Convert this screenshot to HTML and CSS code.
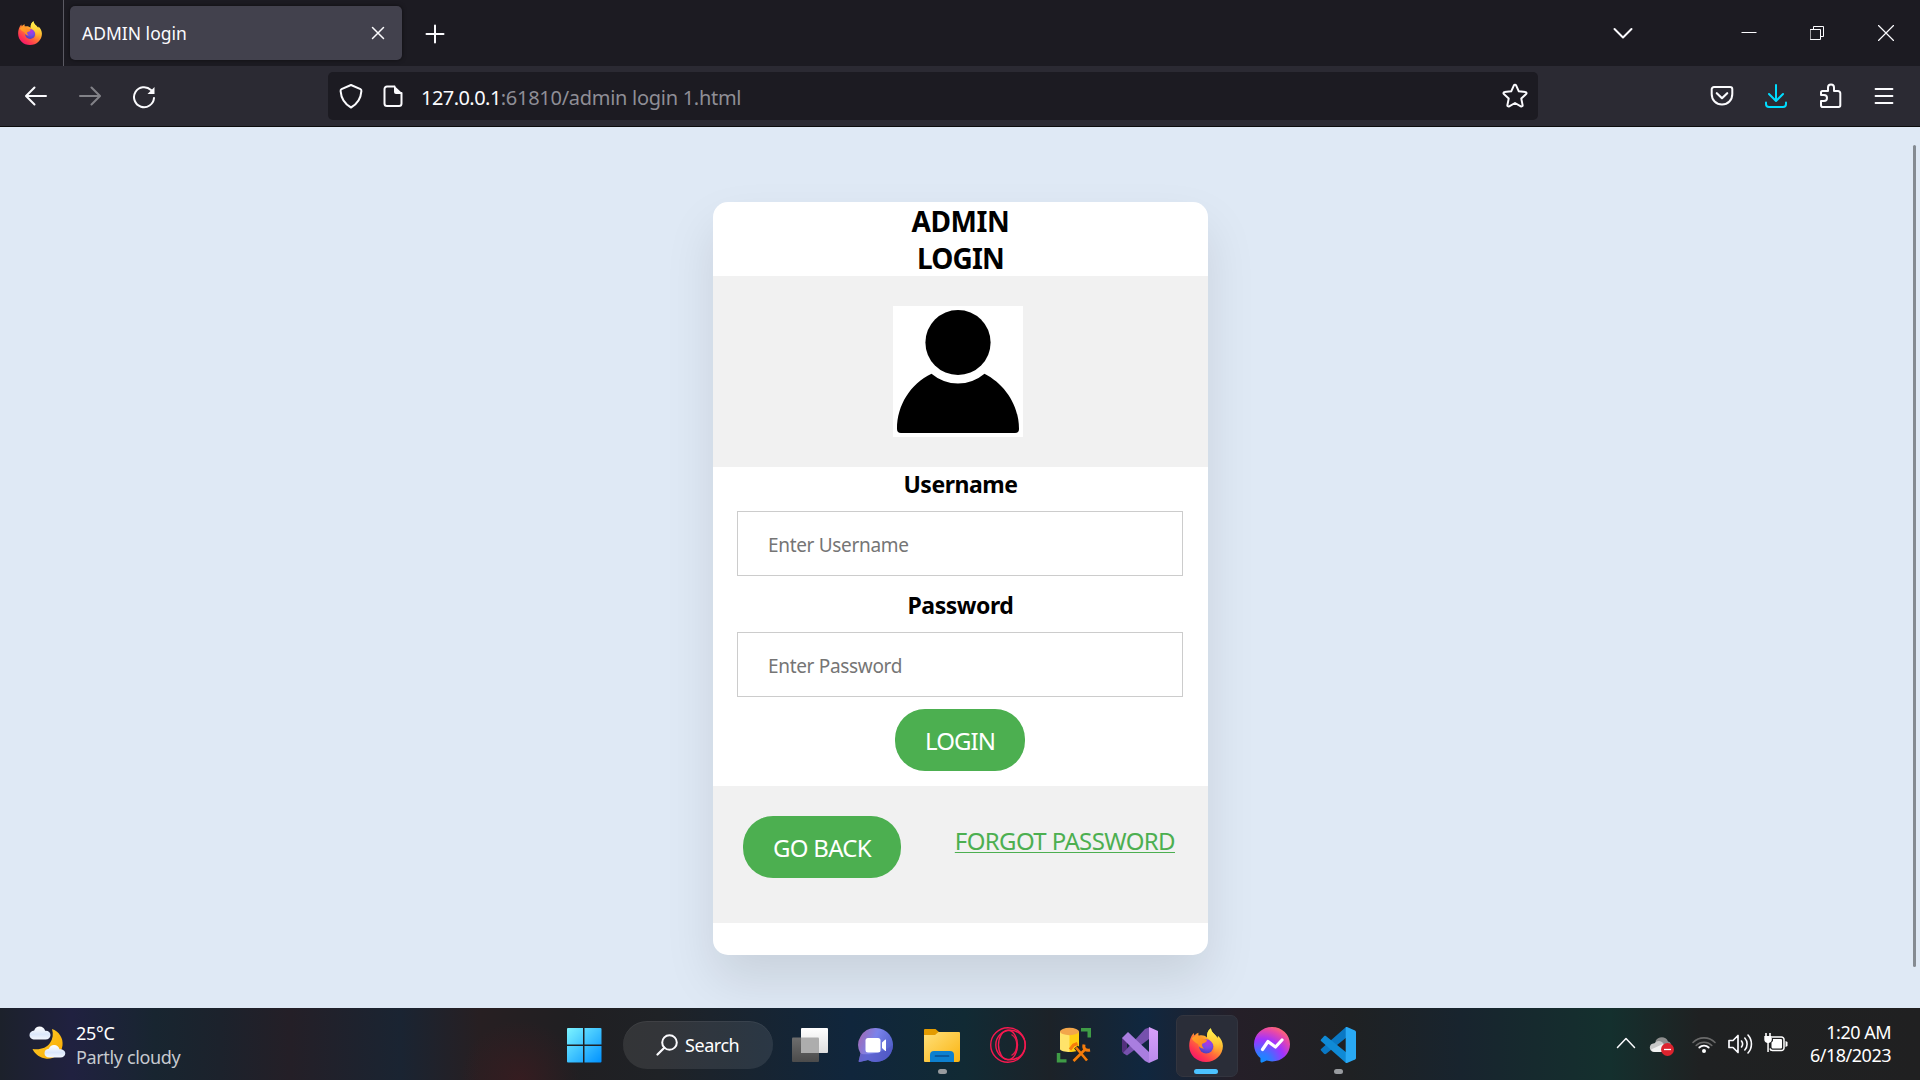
FILE: index.html
```html
<!DOCTYPE html>
<html lang="en">
<head>
<meta charset="utf-8">
<title>ADMIN login</title>
<link rel="stylesheet" href="styles.css">
</head>
<body>
<svg class="defs" width="0" height="0" aria-hidden="true">
  <defs>
    <linearGradient id="fxBody" x1=".85" y1=".1" x2=".2" y2=".95"><stop offset="0" stop-color="#fff44f"/><stop offset=".3" stop-color="#ffb52e"/><stop offset=".55" stop-color="#ff7139"/><stop offset=".8" stop-color="#ff3750"/><stop offset="1" stop-color="#f5156c"/></linearGradient>
    <linearGradient id="fxFlame" x1=".5" y1="0" x2=".5" y2="1"><stop offset="0" stop-color="#fff44f"/><stop offset=".55" stop-color="#ffcb37" stop-opacity=".85"/><stop offset="1" stop-color="#ff8a2a" stop-opacity="0"/></linearGradient>
    <radialGradient id="fxGlobe" cx=".6" cy=".25" r=".8"><stop offset="0" stop-color="#b833e1"/><stop offset=".45" stop-color="#7a4be8"/><stop offset="1" stop-color="#4a40b8"/></radialGradient>
    <linearGradient id="fxHead" x1="0" y1="0" x2="1" y2="1"><stop offset="0" stop-color="#ffa42a"/><stop offset="1" stop-color="#ff8020"/></linearGradient>
    <symbol id="firefox" viewBox="0 0 34 34">
      <path fill="url(#fxBody)" d="M2.4 8.2C3.4 6.5 4.2 5.5 4.9 5c0 1 .1 1.800.4 2.600C6.500 6.200 8 5.100 9.500 4.700c-.3 1.100-.2 2.200.1 3C13 6.800 16 7.500 18 9.500c-.3-3.800.8-7.200 3.900-9.300.2 2.900 2.100 4.600 4.500 7 .8.8 1.600 1.800 2.100 2.800l.5-2.300C32 10.500 33.900 14 33.900 18c0 8.900-7.500 16-16.900 16S.2 27 .2 18c0-3.700.8-6.900 2.200-9.800z"/>
      <circle cx="17.200" cy="18.400" r="7.100" fill="url(#fxGlobe)"/>
      <path fill="url(#fxHead)" d="M2.600 10.500C5 8 8 7.300 10.500 8.100c1.300 2 2.700 2.700 5.600 3.200 1.200.2 2 .7 1.700 1.700-.3 1.200-2.600 2.200-4.600 2.700-.5 2 .3 3.800 2.200 4.800-3.300.3-5.800-1.500-6.300-4.500-2-1-4.500-2.500-6.500-5.500z"/>
      <path fill="url(#fxFlame)" d="M18 9.500c-.3-3.800.8-7.200 3.900-9.300.2 2.900 2.100 4.600 4.500 7 3 3 4.200 7 3.400 11.500-.8 5-4 8.300-8 9.300 4-4 4.300-8.600 2.300-12.300C22.700 13 20 11.800 18 9.500z"/>
    </symbol>
  </defs>
</svg>

<header class="browser">
  <div class="tabstrip">
    <div class="fxview"><svg width="24" height="24"><use href="#firefox"/></svg></div>
    <div class="tab">
      <span class="tab-title">ADMIN login</span>
      <svg class="line" width="14" height="14" viewBox="0 0 14 14"><path d="M1.500 1.500l11 11M12.500 1.500l-11 11" stroke-width="1.500"/></svg>
    </div>
    <svg class="line newtab" width="20" height="20" viewBox="0 0 20 20"><path d="M10 1.500v17M1.500 10h17" stroke-width="2"/></svg>
    <div class="winbuttons">
      <svg class="line" width="20" height="20" viewBox="0 0 20 20"><path d="M1.500 6l8.500 8.500L18.500 6" stroke-width="2"/></svg>
      <svg class="line min" width="16" height="16" viewBox="0 0 16 16"><path d="M.5 7.500h15" stroke-width="1" stroke-linecap="butt"/></svg>
      <svg class="line restore" width="14" height="14" viewBox="0 0 14 14"><path d="M.5 3.500h10v10H.5zM3.500 3.500v-3h10v10h-3" stroke-width="1" stroke-linejoin="miter"/></svg>
      <svg class="line close" width="16" height="16" viewBox="0 0 16 16"><path d="M.5.5l15 15M15.500.5l-15 15" stroke-width="1.200"/></svg>
    </div>
  </div>
  <nav class="toolbar">
    <svg class="line back" width="24" height="24" viewBox="0 0 24 24"><path d="M22 12H2.500M10.500 3.500L2 12l8.500 8.500" stroke-width="2"/></svg>
    <svg class="line forward" width="24" height="24" viewBox="0 0 24 24"><path d="M2 12h19.500M13.500 3.500L22 12l-8.500 8.500" stroke-width="2"/></svg>
    <svg class="line reload" width="24" height="24" viewBox="0 0 24 24"><path d="M22 13a10 10 0 1 1-3-8" stroke-width="2"/><path d="M22.500 2v7h-7z" fill="#fbfbfe" stroke="none"/></svg>
    <div class="urlbar">
      <svg class="line" width="24" height="26" viewBox="0 0 24 26"><path d="M12 2l9.500 4.200c.8.400 1 1 .9 2C21.800 15.500 18.500 21 12 24.500 5.500 21 2.200 15.500 1.600 8.200c-.1-1 .1-1.600.9-2z" stroke-width="2"/></svg>
      <svg class="line page" width="20" height="24" viewBox="0 0 20 24"><path d="M11.500 2.500H4A2.500 2.500 0 0 0 1.500 5v14.500A2.500 2.500 0 0 0 4 22h12a2.500 2.500 0 0 0 2.500-2.500V9" stroke-width="2"/><path d="M11 1.500L19 9v1h-6a2 2 0 0 1-2-2z" fill="#fbfbfe" stroke="none"/></svg>
      <p class="url"><span class="host">127.0.0.1</span><span class="path">:61810/admin login 1.html</span></p>
      <svg class="line" width="26" height="26" viewBox="0 0 26 26"><path d="M11.900 2.300c.4-.9 1.800-.9 2.200 0l2.700 6 6.600.8c1.100.1 1.500 1.300.7 2l-4.800 4.500 1.300 6.500c.2 1-.9 1.700-1.800 1.200L13 20l-5.800 3.300c-.9.5-2-.2-1.800-1.200l1.300-6.500-4.800-4.500c-.8-.7-.4-1.900.7-2l6.600-.8z" stroke-width="2"/></svg>
    </div>
    <div class="tools">
      <svg class="line" width="24" height="24" viewBox="0 0 24 24"><path d="M4 3h16a2.300 2.300 0 0 1 2.300 2.300V10c0 6-4.300 10.500-10.300 10.500S1.700 16 1.700 10V5.300A2.300 2.300 0 0 1 4 3z" stroke-width="2"/><path d="M6.800 9.200l5.200 5 5.200-5" stroke-width="2.200"/></svg>
      <svg class="line download" width="24" height="26" viewBox="0 0 24 26"><path d="M12 2v15.500M5 11l7 7 7-7M2 19.500V21a3 3 0 0 0 3 3h14a3 3 0 0 0 3-3v-1.500" stroke-width="2"/></svg>
      <svg class="line" width="24" height="26" viewBox="0 0 24 26"><path d="M3.500 8H9V4.500a3 3 0 0 1 6 0V8h4a2.300 2.300 0 0 1 2.300 2.300v12A1.700 1.700 0 0 1 19.600 24H3.800A1.800 1.800 0 0 1 2 22.200V18h3a2.900 2.900 0 0 0 0-6H2V9.500A1.500 1.500 0 0 1 3.500 8z" stroke-width="2"/></svg>
      <svg class="line" width="20" height="20" viewBox="0 0 20 20"><path d="M1.500 3h17M1.500 10h17M1.500 17h17" stroke-width="1.800"/></svg>
    </div>
  </nav>
</header>

<main class="page-view">
  <form class="card">
    <h1 class="title">ADMIN<br><span class="tight">LOGIN</span></h1>
    <div class="avatar">
      <svg width="130" height="131" viewBox="0 0 130 131"><path fill="#fff" d="M0 0h130v131H0z"/><circle cx="65" cy="36.500" r="32.600"/><path d="M38.500 67.800a41 41 0 0 0 53 0C111.500 78 126 99 126 123a4 4 0 0 1-4 4H8a4 4 0 0 1-4-4C4 99 17.500 78 38.500 67.800z"/></svg>
    </div>
    <div class="fields">
      <label class="label" for="user">Username</label>
      <input class="field" id="user" type="text" placeholder="Enter Username">
      <label class="label second" for="pass">Password</label>
      <input class="field" id="pass" type="password" placeholder="Enter Password">
      <button class="btn" type="button">LOGIN</button>
    </div>
    <footer class="card-footer">
      <button class="btn" type="button">GO BACK</button>
      <a class="forgot" href="#">FORGOT PASSWORD</a>
    </footer>
  </form>
  <div class="scrollbar"></div>
</main>

<footer class="taskbar">
  <div class="weather">
    <svg width="38" height="36" viewBox="0 0 38 36">
      <defs><linearGradient id="moon" x1="0" y1="0" x2="1" y2="1"><stop offset="0" stop-color="#ffd02e"/><stop offset="1" stop-color="#f9a800"/></linearGradient><linearGradient id="cloud" x1="0" y1="0" x2="0" y2="1"><stop offset="0" stop-color="#fff"/><stop offset=".6" stop-color="#dbe7fb"/><stop offset="1" stop-color="#f3f7ff"/></linearGradient></defs>
      <path fill="url(#moon)" d="M23 4c7 2.500 11.500 9 10.500 16.500-1 8-8 13.800-16 13.200C11.500 33.200 6 29.500 3.500 24c8 1 14-1 17.500-6 3-4.300 3.500-9 2-14z"/>
      <path fill="url(#cloud)" d="M6 14.500C2.500 14.500.5 12.500.5 10s2-4.500 4.700-4.600C6 2.800 8 1.500 10.500 1.500c3 0 5 1.700 5.600 4.200 3.200-.3 5.400 1.600 5.400 4.300s-2 4.500-5 4.500z"/>
      <path fill="url(#cloud)" d="M20.500 32.500c-3.300 0-5-1.800-5-4.300s1.700-4.200 4.300-4.400c.8-2.400 2.800-3.800 5.200-3.800 3 0 4.900 1.700 5.500 4.200 3.300-.2 5.800 1.500 5.800 4.100 0 2.500-2 4.200-4.800 4.200z"/>
    </svg>
    <p class="weather-text"><span class="temp">25°C</span><span class="sky">Partly cloudy</span></p>
  </div>

  <div class="apps">
    <div class="app">
      <svg width="36" height="36" viewBox="0 0 36 36"><defs><linearGradient id="win" x1="0" y1="0" x2="1" y2="1" ><stop offset="0" stop-color="#7df4ff"/><stop offset="1" stop-color="#0091ff"/></linearGradient></defs><path fill="url(#win)" d="M2 1h15v16.500H1V2a1 1 0 0 1 1-1zM18.500 1H34.500a1 1 0 0 1 1 1v15.500h-17zM1 19h16v16.500H2a1 1 0 0 1-1-1zM18.500 19h17v15.500a1 1 0 0 1-1 1h-16z"/></svg>
    </div>
    <div class="search">
      <svg class="line" width="22" height="22" viewBox="0 0 22 22"><circle cx="13.500" cy="8.500" r="7.300" stroke-width="2"/><path d="M8.300 13.700L1.500 20.500" stroke-width="2.200"/></svg>
      <span class="search-text">Search</span>
    </div>
    <div class="app">
      <svg width="36" height="36" viewBox="0 0 36 36"><defs><linearGradient id="tvA" x1="0" y1="0" x2="0" y2="1"><stop offset="0" stop-color="#6d6d6d"/><stop offset="1" stop-color="#4b4b4b"/></linearGradient><linearGradient id="tvB" x1="0" y1="0" x2="0" y2="1"><stop offset="0" stop-color="#fff"/><stop offset="1" stop-color="#dedede"/></linearGradient></defs><rect y="10.500" width="27" height="24.500" rx="1" fill="url(#tvA)"/><rect x="9" y="1" width="27" height="25" rx="1" fill="url(#tvB)"/><path fill="#adadad" d="M9 10.500h17a1 1 0 0 1 1 1V26H10a1 1 0 0 1-1-1z"/></svg>
    </div>
    <div class="app">
      <svg width="36" height="36" viewBox="0 0 36 36"><defs><linearGradient id="chat" x1="0" y1=".2" x2="1" y2=".6"><stop offset="0" stop-color="#a06ab4"/><stop offset=".45" stop-color="#7b83eb"/><stop offset="1" stop-color="#4f5fc8"/></linearGradient></defs><path fill="url(#chat)" d="M18 1a17 17 0 1 1-8 32L1.500 35c-.6.100-1-.4-.8-1l1.800-7.500A17 17 0 0 1 18 1z"/><path fill="#5256c4" opacity=".65" d="M2.500 26.500C10 29 24 26 35 18a17 17 0 0 1-25 15l-8.500 2c-.6.100-1-.4-.8-1z"/><rect x="7.500" y="11" width="15" height="14.500" rx="2.500" fill="#fff"/><path fill="#fff" d="M24 15.500l3-2.800c.5-.4 1-.2 1 .4v10.300c0 .6-.5.800-1 .4l-3-2.800z"/></svg>
    </div>
    <div class="app running">
      <svg width="36" height="36" viewBox="0 0 36 36"><defs><linearGradient id="folder" x1="0" y1="0" x2="1" y2="1"><stop offset="0" stop-color="#ffe07a"/><stop offset="1" stop-color="#fbb411"/></linearGradient></defs><path fill="#e39b00" d="M0 3a1 1 0 0 1 1-1h10.500l3.500 3v5H0z"/><path fill="url(#folder)" d="M0 8h11l3.500-3H35a1 1 0 0 1 1 1v27a2 2 0 0 1-2 2H1a1 1 0 0 1-1-1z"/><path fill="#0d80d0" d="M6 35v-7a4 4 0 0 1 4-4h16a4 4 0 0 1 4 4v7z"/><path stroke="#0a4f91" stroke-width="1.700" stroke-linecap="round" d="M11.500 29h13"/></svg>
    </div>
    <div class="app">
      <svg width="36" height="36" viewBox="0 0 36 36" fill="none" stroke="#f5194f" stroke-width="1.400"><circle cx="18" cy="18" r="17.300"/><circle cx="20.500" cy="18" r="14.700"/><ellipse cx="18" cy="18" rx="9.500" ry="14.700"/><path d="M21.500 7.500c7 4 7 17 0 21" stroke-opacity=".9"/></svg>
    </div>
    <div class="app">
      <svg width="36" height="36" viewBox="0 0 36 36"><path fill="#ffe36a" d="M4 4.500h10V25C9 25 4 24 4 22z"/><path fill="#ffcf12" d="M13.500 4.500h9.500V22c0 2-4.500 3-9.500 3z"/><ellipse cx="13.500" cy="4.500" rx="9.500" ry="3.700" fill="#f2a64b"/><path fill="#3f9c46" d="M25 1h10v9.500h-3.500V4.500H25zM.8 26h3.500v6.300h6.200v3.200H.8z"/><g fill="none" stroke="#25241f" stroke-width="5"><path d="M18.500 33.500L29 23M20 20l11 13"/></g><g fill="none" stroke="#f57c0b" stroke-width="2.600"><path d="M17.500 34L29 22.500M20 20.500L31 33.500"/><path d="M28 17.500c-1 4 1.500 6.500 6 5.500M14 22.500l3.500-4.500 4-1.500" stroke-width="3"/></g></svg>
    </div>
    <div class="app">
      <svg width="36" height="36" viewBox="0 0 36 36"><defs><linearGradient id="vs" x1="0" y1="0" x2="0" y2="1"><stop offset="0" stop-color="#d9a0fb"/><stop offset="1" stop-color="#b98aec"/></linearGradient></defs><path fill="#52307c" d="M0 11l5-2.500V28L0 25z"/><path fill="#7651ad" d="M5 28.500L1 26 23 2l4-1.500V12z"/><path fill="#a97ee0" d="M0 11l6-6L27 25v11l-4-2z"/><path fill="url(#vs)" d="M27 0l9 4v28l-9 4z"/></svg>
    </div>
    <div class="app active">
      <svg width="36" height="36" viewBox="0 0 36 36"><use href="#firefox" x="1" y="1" width="34" height="34"/></svg>
    </div>
    <div class="app">
      <svg width="36" height="36" viewBox="0 0 36 36"><defs><radialGradient id="msg" cx=".2" cy="1" r="1.100"><stop offset="0" stop-color="#0a92ff"/><stop offset=".25" stop-color="#3477ff"/><stop offset=".6" stop-color="#a033ff"/><stop offset=".85" stop-color="#e848a8"/><stop offset="1" stop-color="#ff6a70"/></radialGradient></defs><path fill="url(#msg)" d="M18 0c10 0 18 7.500 18 17.200s-8 17.200-18 17.200c-2 0-3.700-.3-5.300-.8l-4.500 2c-.9.400-1.700-.1-1.700-1L6.400 31C2.300 27.500 0 22.700 0 17.200 0 7.500 8 0 18 0z"/><path d="M8.500 22.500l5.500-8 7.500 5.500 6.500-7" fill="none" stroke="#fff" stroke-width="3.200" stroke-linejoin="round" stroke-linecap="round"/></svg>
    </div>
    <div class="app running">
      <svg width="36" height="36" viewBox="0 0 36 36"><path fill="#0a78c4" d="M1 23.500l3 3.200c.7.600 1.500.6 2.200 0L27 10V0h-1L1 22c-.5.500-.5 1 0 1.500z"/><path fill="#0f8ad6" d="M1 12.500l3-3.200c.7-.6 1.500-.6 2.200 0L27 26v10h-1L1 14c-.5-.5-.5-1 0-1.500z"/><path fill="#29a9f4" d="M27 0l8 3.500a1.800 1.800 0 0 1 1 1.600v25.800a1.800 1.800 0 0 1-1 1.600L27 36c-.8.200-1.300-.3-1.300-1V1c0-.7.5-1.200 1.300-1z"/></svg>
    </div>
  </div>

  <div class="tray">
    <svg class="line" width="20" height="14" viewBox="0 0 20 14"><path d="M1.500 11.500L10 2.500l8.500 9" stroke-width="1.500"/></svg>
    <svg class="onedrive" width="26" height="22" viewBox="0 0 26 22"><path fill="#8e8e8e" d="M6.500 6C8.500 1.500 17 .5 19 6.500c2.500.5 3 2 3 4.500H8z"/><path fill="#c9c9c9" d="M5.500 17C-1 17-.5 8 5.500 8.300c3-4 8-2 9.500 1.200L13 17z"/><path fill="#f2f2f2" d="M2 14.500L14 9l2 8H6c-2 0-3.200-1-4-2.500z"/><circle cx="18.500" cy="14.500" r="6.500" fill="#dc232e"/><path stroke="#fff" stroke-width="1.300" d="M15 14.500h7"/></svg>
    <svg class="line wifi" width="26" height="20" viewBox="0 0 26 20"><path d="M2 8.500a15.500 15.500 0 0 1 22 0M5.200 11.500a11 11 0 0 1 15.600 0" stroke="#6a6a6a" stroke-width="1.600"/><path d="M8.300 13.500a6.600 6.600 0 0 1 9.400 0" stroke-width="1.800"/><circle cx="13" cy="17" r="2" fill="#fff" stroke="none"/></svg>
    <svg class="line volume" width="26" height="22" viewBox="0 0 26 22"><path d="M2 7.500h4l5-5v17l-5-5H2z" stroke-width="1.700"/><path d="M14.500 8a5 5 0 0 1 0 6M17.800 5a9 9 0 0 1 0 12M21 2a13.500 13.500 0 0 1 0 18" stroke-width="1.600"/></svg>
    <svg class="battery" width="26" height="22" viewBox="0 0 26 22"><path fill="none" stroke="#fff" stroke-width="1.500" d="M9 5h9.500A2.500 2.500 0 0 1 21 7.500V16a2.500 2.500 0 0 1-2.500 2.500h-9A2.500 2.500 0 0 1 7 16.500"/><path fill="#fff" d="M10 7h8a1 1 0 0 1 1 1v7.500a1 1 0 0 1-1 1h-8A1.500 1.500 0 0 1 8.500 15v-4.500L10 9zM22.500 9l2 1v4l-2 1zM2.200 1h1.600v3h2.400V1h1.600v3h1v3.500a3.500 3.500 0 0 1-3 3.400V20H4.300v-9a3.500 3.500 0 0 1-3-3.500V4h.9z"/></svg>
    <p class="clock"><span class="time">1:20 AM</span><span class="date">6/18/2023</span></p>
  </div>
</footer>
</body>
</html>
```
FILE: styles.css
```css
* { box-sizing: border-box; margin: 0; padding: 0; }
body {
  width: 1920px; height: 1080px; overflow: hidden;
  display: flex; flex-direction: column;
  font-family: "Noto Sans", "Open Sans", sans-serif;
  background: #dfe9f5;
}
svg { display: block; flex: none; }
.defs { position: absolute; }
.line { fill: none; stroke: #fbfbfe; stroke-linecap: round; stroke-linejoin: round; }

/* Browser chrome */
.browser { flex: none; height: 127px; background: #2b2a33; border-bottom: 1px solid #0c0c0d; }
.tabstrip { height: 66px; display: flex; align-items: center; background: #1c1b22; }
.fxview {
  width: 64px; height: 66px; padding: 0 0 1px 18px; margin-right: 6px;
  display: flex; align-items: center; border-right: 1px solid #5b5a63;
}
.tab {
  width: 332px; height: 54px; padding: 0 17px 0 12px;
  display: flex; align-items: center; justify-content: space-between;
  border-radius: 5px; background: #42414d; box-shadow: 0 0 4px rgba(0, 0, 0, .5);
}
.tab-title { font-size: 17.5px; line-height: 24px; color: #fbfbfe; }
.newtab { margin-left: 22.5px; margin-top: 2px; }
.winbuttons { margin-left: auto; padding-right: 26px; display: flex; align-items: center; }
.min { margin-left: 108px; }
.restore { margin-left: 53px; }
.close { margin-left: 54px; }

.toolbar { height: 60px; display: flex; align-items: center; }
.back { margin-left: 24px; }
.forward { margin-left: 30px; opacity: .42; }
.reload { margin: 2px 0 0 30px; }
.urlbar {
  width: 1210px; height: 48px; margin-left: 172px; padding: 0 10px 0 11px;
  display: flex; align-items: center; border-radius: 5px; background: #1c1b22;
}
.page { margin-left: 20px; }
.url { flex: 1; padding: 3px 0 0 18px; font-size: 20px; line-height: 28px; white-space: pre; }
.host { color: #fbfbfe; letter-spacing: -.55px; }
.path { color: #8f8e96; letter-spacing: -.28px; }
.tools { margin-left: 172px; display: flex; align-items: center; gap: 30px; }
.tools .download { stroke: #00ddff; margin-left: -.5px; }
.tools .download + svg { margin-left: 1px; }
.tools svg:last-child { margin-left: 1.5px; }

/* Page content */
.page-view {
  flex: none; height: 881px; padding-top: 75px; overflow: hidden;
  position: relative; background: #dfe9f5;
}
.card {
  width: 495px; height: 753px; margin-left: 713px; overflow: hidden;
  border-radius: 15px; background: #fff; box-shadow: 0 25px 50px rgba(0, 0, 0, .1);
}
.title { height: 74px; padding-top: 1px; font-size: 28px; line-height: 37px; letter-spacing: -.4px; text-align: center; color: #000; }
.title .tight { letter-spacing: -.8px; }
.avatar { height: 191px; padding: 30px 0 0 180px; background: #f1f1f1; }
.fields { height: 319px; display: flex; flex-direction: column; align-items: center; }
.label { height: 34px; margin-bottom: 10px; font-size: 23px; line-height: 34px; font-weight: 700; letter-spacing: -.46px; }
.second { margin-top: 12px; }
.field {
  width: 446px; height: 65px; padding: 2px 30px 0; margin-right: 1px;
  border: 1px solid #ccc; background: #fff;
  font: 19px "Noto Sans", "Open Sans", sans-serif; letter-spacing: -.32px;
}
.field::placeholder { color: #757575; opacity: 1; }
.btn {
  height: 62px; padding: 2px 30px 0; border: 0; border-radius: 30px;
  background: #4caf50; color: #fff;
  font: 24px/60px "Noto Sans", "Open Sans", sans-serif; letter-spacing: -.72px;
}
.fields .btn { margin-top: 12px; margin-right: 1px; letter-spacing: -.94px; }
.card-footer {
  height: 137px; padding: 30px 33px 0 30px;
  display: flex; justify-content: space-between; align-items: flex-start; background: #f1f1f1;
}
.forgot {
  margin-top: 8px; font-size: 24px; line-height: 34px; letter-spacing: -.62px; color: #4caf50;
  text-decoration-thickness: 1px; text-underline-offset: 2px; text-decoration-skip-ink: none;
}
.scrollbar {
  position: absolute; left: 1913px; top: 18px; width: 3px; height: 822px;
  border-radius: 2px; background: #858b92;
}

/* Taskbar */
.taskbar {
  flex: none; height: 72px; display: grid; grid-template-columns: 551px 820px 1fr;
  background:
    radial-gradient(ellipse 60px 60px at 520px 72px, rgba(75, 25, 30, .45), transparent),
    linear-gradient(90deg, #1c212b 0, #202140 72px, #182530 155px, #1c222c 220px, #241f27 290px, #1a2432 400px,
      #271f22 480px, #201f22 570px, #1f2226 660px, #10263c 850px, #112a34 965px, #1c2228 1050px, #10273f 1145px,
      #251f28 1237px, #1f2123 1350px, #18242e 1460px, #14302e 1610px, #1f2122 1700px, #202021 1920px);
}
.weather { display: flex; align-items: flex-start; padding: 17px 0 0 29px; }
.weather-text, .clock { display: flex; flex-direction: column; font-size: 18px; white-space: nowrap; }
.weather-text { padding: 0 0 0 9px; margin-top: -4px; line-height: 24px; }
.temp { color: #fff; letter-spacing: -.3px; }
.sky { color: #c6cacf; letter-spacing: -.35px; }
.apps { display: flex; align-items: center; }
.app { width: 66px; height: 72px; padding: 1px 0 0 15px; display: flex; align-items: center; position: relative; }
.running::after, .active::after {
  content: ""; position: absolute; left: 29px; top: 61px; width: 9px; height: 5px;
  border-radius: 3px; background: #989b9f;
}
.active::after { left: 21px; width: 24px; background: #4cc2ff; }
.active::before {
  content: ""; position: absolute; left: 3px; top: 7px; width: 60px; height: 60px;
  border: 1px solid #33353f; border-radius: 7px; background: #2a2d38;
}
.active svg { position: relative; }
.search {
  width: 150px; height: 48px; margin: 2px 4px 0 6px; padding-left: 33px;
  display: flex; align-items: center; border-radius: 24px;
  background: rgba(255, 255, 255, .09); box-shadow: inset 0 1px rgba(255, 255, 255, .06);
}
.search-text { margin-left: 7px; font-size: 18px; letter-spacing: -.45px; color: #fff; }
.tray { display: flex; align-items: flex-start; padding: 28px 29px 0 245px; }
.onedrive { margin: -1px 0 0 13px; }
.wifi { margin: -2px 0 0 16px; }
.volume { margin: -3px 0 0 10px; }
.battery { margin: -4px 0 0 10px; }
.clock { margin: -15px 0 0 auto; line-height: 23px; text-align: right; color: #fff; }
.time { letter-spacing: -.5px; }
.date { letter-spacing: -.5px; }
```
